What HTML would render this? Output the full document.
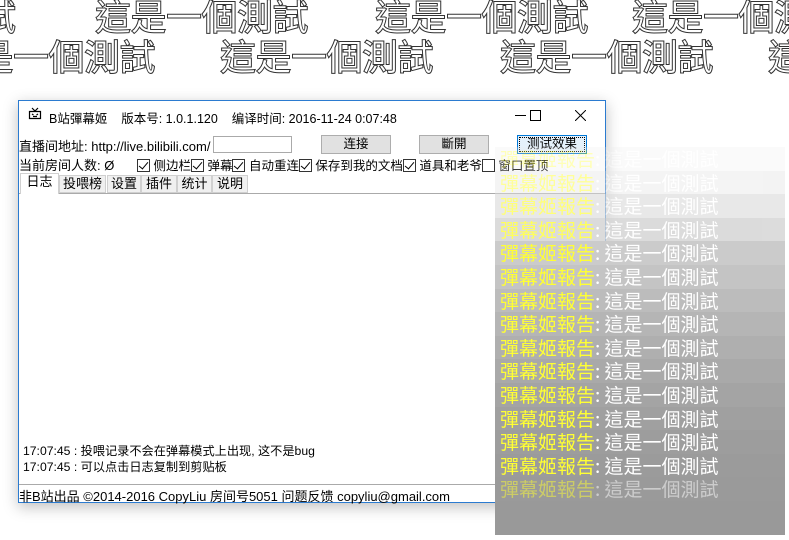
<!DOCTYPE html>
<html><head><meta charset="utf-8"><style>
*{margin:0;padding:0;box-sizing:border-box}
body{width:789px;height:540px;background:#fff;position:relative;overflow:hidden;font-family:"Liberation Sans","Noto Sans CJK SC",sans-serif;font-size:12.5px;color:#000}
.ot{position:absolute;font-family:"Noto Sans CJK TC","Noto Sans CJK SC",sans-serif;font-size:36px;font-weight:500;color:#fff;-webkit-text-stroke:1px #333;white-space:nowrap;line-height:40px;letter-spacing:-0.5px}
.win{position:absolute;left:18px;top:100px;width:588px;height:403px;border:1px solid #2b7bd0;background:#fff;box-shadow:0 4px 14px rgba(0,0,0,.25)}
.a{position:absolute;white-space:nowrap}
.btn{position:absolute;height:19px;background:#e1e1e1;border:1px solid #adadad;text-align:center;line-height:17px}
.cb{display:inline-block;width:13px;height:13px;border:1px solid #333;vertical-align:-2px;position:relative;background:#fff}
.cb.c::after{content:"";position:absolute;left:3px;top:0px;width:4px;height:8px;border:solid #000;border-width:0 1.5px 1.5px 0;transform:rotate(40deg)}
.tab{position:absolute;top:74px;height:18px;background:#f0f0f0;border:1px solid #d0d0d0;line-height:16px;text-align:center}
.ov{position:absolute;left:495px;top:147px;width:290px;height:388px}
.row{height:23.6px;line-height:23.6px;font-family:"Noto Sans CJK TC",sans-serif;font-size:19px;padding-left:5px;white-space:nowrap;overflow:hidden}
.row .y{color:#ffff33}.row .w{color:#fff}
</style></head><body>
<div class="ot" style="left:-20px;top:-5px">試</div>
<div class="ot" style="left:95px;top:-5px">這是一個測試</div>
<div class="ot" style="left:375px;top:-5px">這是一個測試</div>
<div class="ot" style="left:632px;top:-5px">這是一個測試</div>
<div class="ot" style="left:-58px;top:35px">這是一個測試</div>
<div class="ot" style="left:220px;top:35px">這是一個測試</div>
<div class="ot" style="left:500px;top:35px">這是一個測試</div>
<div class="ot" style="left:768px;top:35px">這是一個測試</div>

<div class="win">
<svg class="a" style="left:9px;top:6px" width="14" height="13" viewBox="0 0 14 13"><path d="M4 1l3 3 3-3M1.5 4.5h11v7h-11z M4 7l1.5 1 M10 7l-1.5 1 M5 9.5h4" fill="none" stroke="#000" stroke-width="1.2"/></svg>
<div class="a" style="left:30px;top:7px">B站彈幕姬&nbsp;&nbsp;&nbsp;&nbsp;版本号: 1.0.1.120&nbsp;&nbsp;&nbsp;&nbsp;编译时间: 2016-11-24 0:07:48</div>
<div class="a" style="left:496px;top:14px;width:11px;height:1px;background:#000"></div>
<div class="a" style="left:511px;top:9px;width:11px;height:11px;border:1px solid #000"></div>
<svg class="a" style="left:556px;top:9px" width="11" height="11"><path d="M0 0L11 11M11 0L0 11" stroke="#000" stroke-width="1"/></svg>
<div class="a" style="left:0;top:35px;font-size:13px">直播间地址: http://live.bilibili.com/</div>
<div class="a" style="left:194px;top:35px;width:79px;height:17px;border:1px solid #aaa"></div>
<div class="btn" style="left:302px;top:34px;width:70px">连接</div>
<div class="btn" style="left:400px;top:34px;width:70px">斷開</div>
<div class="btn" style="left:498px;top:34px;width:70px;background:#e5f1fb;border:1px solid #0078d7;outline:1px dotted #000;outline-offset:-3px">测试效果</div>
<div class="a" style="left:0;top:54px;font-size:13px">当前房间人数: Ø</div>
<div class="a" style="left:118px;top:54px;font-size:12.5px"><span class="cb c"></span> 侧边栏<span class="cb c"></span> 弹幕<span class="cb c"></span> 自动重连<span class="cb c"></span> 保存到我的文档<span class="cb c"></span> 道具和老爷<span class="cb"></span> 窗口置顶</div>
<div class="tab" style="left:1px;top:72px;height:21px;width:39px;background:#fff;border-bottom:none;z-index:2;font-size:13px">日志</div>
<div class="tab" style="left:40px;width:47px;font-size:13px">投喂榜</div>
<div class="tab" style="left:88px;width:34px;font-size:13px">设置</div>
<div class="tab" style="left:122px;width:36px;font-size:13px">插件</div>
<div class="tab" style="left:158px;width:35px;font-size:13px">统计</div>
<div class="tab" style="left:193px;width:36px;font-size:13px">说明</div>
<div class="a" style="left:0;top:92px;width:586px;height:292px;border-top:1px solid #aaa;border-bottom:1px solid #aaa"></div>
<div class="a" style="left:4px;top:340px;font-size:12.2px">17:07:45 : 投喂记录不会在弹幕模式上出现, 这不是bug</div>
<div class="a" style="left:4px;top:356px;font-size:12.2px">17:07:45 : 可以点击日志复制到剪贴板</div>
<div class="a" style="left:0;top:385px;font-size:13px">非B站出品 ©2014-2016 CopyLiu 房间号5051 问题反馈 copyliu@gmail.com</div>
</div>

<div class="ov">
<div class="row" style="background:rgba(235,235,235,.7);opacity:.35"><span class="y">彈幕姬報告</span><span class="w">: 這是一個測試</span></div>
<div class="row" style="background:rgba(228,228,228,.85);opacity:.5"><span class="y">彈幕姬報告</span><span class="w">: 這是一個測試</span></div>
<div class="row" style="background:#dcdcdc;opacity:.65"><span class="y">彈幕姬報告</span><span class="w">: 這是一個測試</span></div>
<div class="row" style="background:#d3d3d3;opacity:.8"><span class="y">彈幕姬報告</span><span class="w">: 這是一個測試</span></div>
<div class="row" style="background:#cbcbcb"><span class="y">彈幕姬報告</span><span class="w">: 這是一個測試</span></div>
<div class="row" style="background:#c4c4c4"><span class="y">彈幕姬報告</span><span class="w">: 這是一個測試</span></div>
<div class="row" style="background:#bcbcbc"><span class="y">彈幕姬報告</span><span class="w">: 這是一個測試</span></div>
<div class="row" style="background:#b5b5b5"><span class="y">彈幕姬報告</span><span class="w">: 這是一個測試</span></div>
<div class="row" style="background:#afafaf"><span class="y">彈幕姬報告</span><span class="w">: 這是一個測試</span></div>
<div class="row" style="background:#a9a9a9"><span class="y">彈幕姬報告</span><span class="w">: 這是一個測試</span></div>
<div class="row" style="background:#a4a4a4"><span class="y">彈幕姬報告</span><span class="w">: 這是一個測試</span></div>
<div class="row" style="background:#a0a0a0"><span class="y">彈幕姬報告</span><span class="w">: 這是一個測試</span></div>
<div class="row" style="background:#9d9d9d"><span class="y">彈幕姬報告</span><span class="w">: 這是一個測試</span></div>
<div class="row" style="background:#9b9b9b"><span class="y">彈幕姬報告</span><span class="w">: 這是一個測試</span></div>
<div class="row" style="background:#9a9a9a"><span class="y" style="opacity:.5">彈幕姬報告</span><span class="w" style="opacity:.5">: 這是一個測試</span></div>
<div style="height:34px;background:#999"></div>
</div>
</body></html>
